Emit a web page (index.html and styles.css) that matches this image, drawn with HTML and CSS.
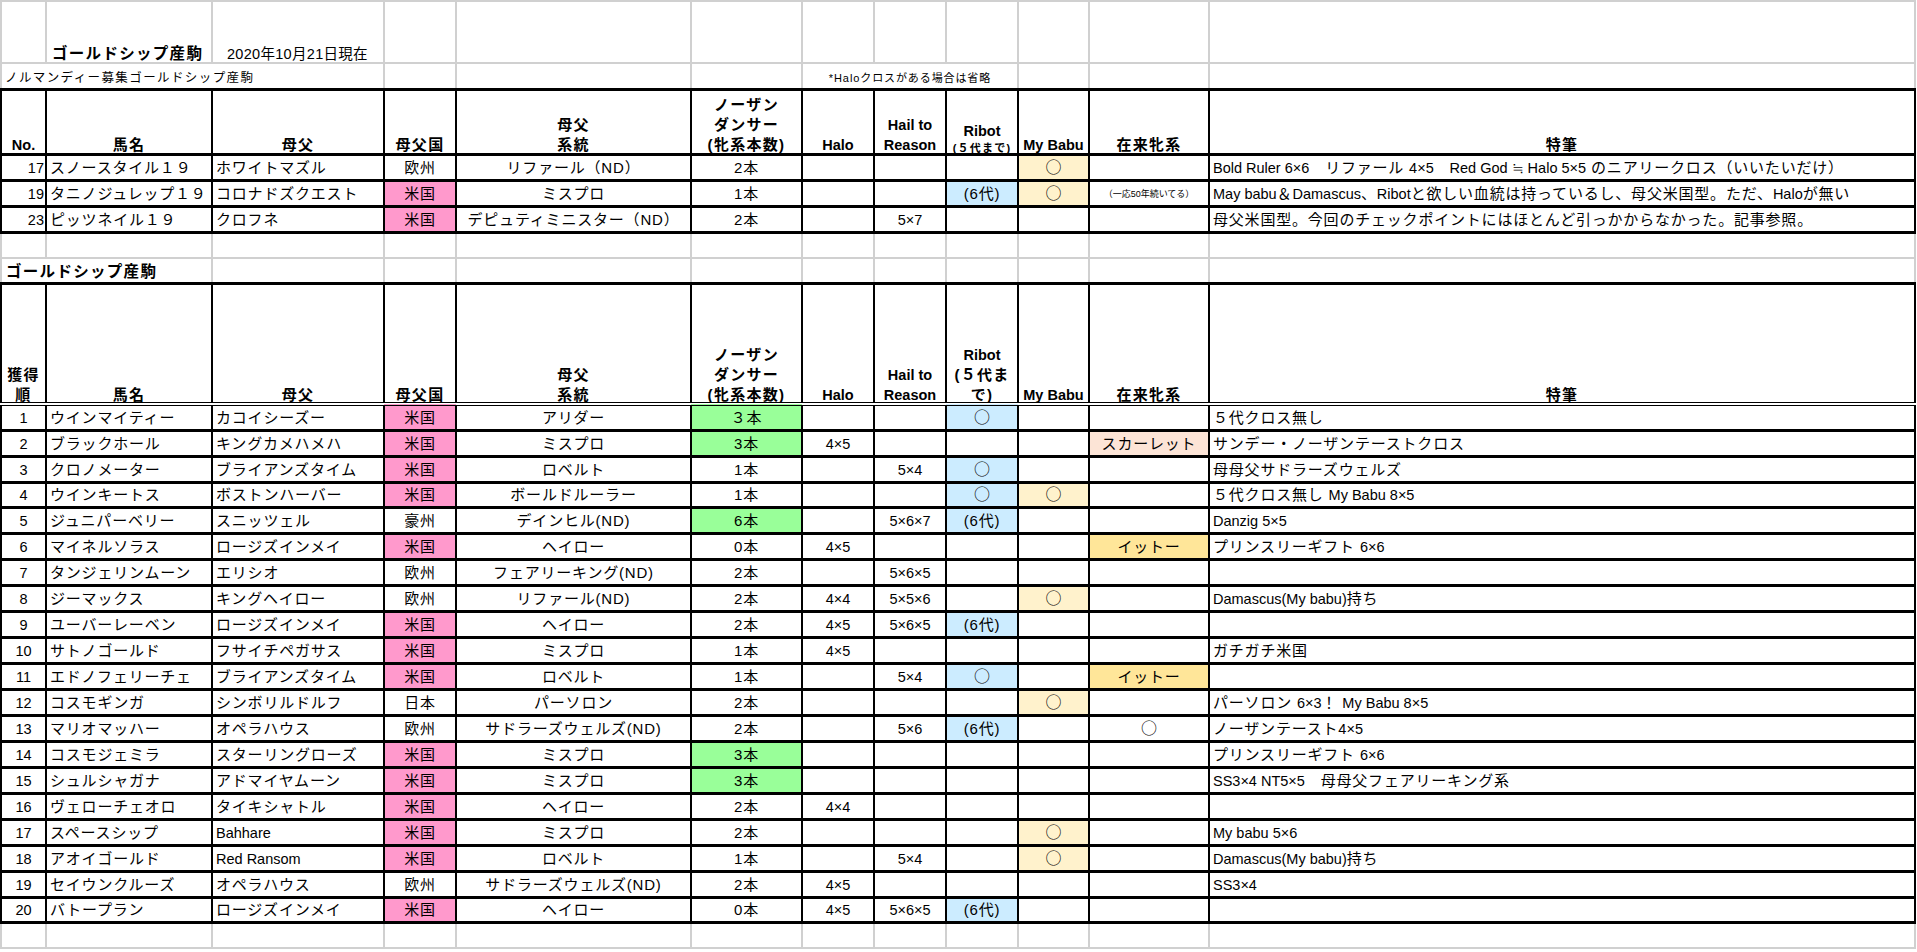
FILE: index.html
```html
<!DOCTYPE html>
<html lang="ja">
<head>
<meta charset="utf-8">
<title>ゴールドシップ産駒</title>
<link rel="stylesheet" href="styles.css">
</head>
<body>
<table class="sheet">
<colgroup>
<col class="c0"><col class="c1"><col class="c2"><col class="c3"><col class="c4"><col class="c5"><col class="c6"><col class="c7"><col class="c8"><col class="c9"><col class="c10"><col class="c11">
</colgroup>
<tbody>
<tr class="h62">
<td></td>
<td class="title">ゴールドシップ産駒</td>
<td class="date">2020年10月21日現在</td>
<td></td><td></td><td></td><td></td><td></td><td></td><td></td><td></td><td></td>
</tr>
<tr class="h26">
<td colspan="3" class="sub">ノルマンディー募集ゴールドシップ産駒</td>
<td></td><td></td><td></td>
<td colspan="3" class="note c">*Haloクロスがある場合は省略</td>
<td></td><td></td><td></td>
</tr>
<tr class="h65 b hd hd1">
<td class="c n"><div class="in">No.</div></td>
<td class="c"><div class="in">馬名</div></td>
<td class="c"><div class="in">母父</div></td>
<td class="c"><div class="in">母父国</div></td>
<td class="c"><div class="in">母父<br>系統</div></td>
<td class="c"><div class="in">ノーザン<br>ダンサー<br>(牝系本数)</div></td>
<td class="c n"><div class="in">Halo</div></td>
<td class="c n"><div class="in">Hail to<br>Reason</div></td>
<td class="c"><div class="in"><span class="n">Ribot</span><span class="sm">(５代まで)</span></div></td>
<td class="c n"><div class="in">My Babu</div></td>
<td class="c"><div class="in">在来牝系</div></td>
<td class="c"><div class="in">特筆</div></td>
</tr>
<tr class="h26 b d">
<td class="r n">17</td>
<td>スノースタイル１９</td>
<td>ホワイトマズル</td>
<td class="c">欧州</td>
<td class="c">リファール（ND）</td>
<td class="c">2本</td>
<td></td><td></td><td></td>
<td class="c cr"><span class="maru">○</span></td>
<td></td>
<td><span class="en">Bold Ruler 6×6</span>　リファール <span class="en">4×5</span>　<span class="en">Red God ≒ Halo 5×5</span> のニアリークロス（いいたいだけ）</td>
</tr>
<tr class="h26 b d">
<td class="r n">19</td>
<td>タニノジュレップ１９</td>
<td>コロナドズクエスト</td>
<td class="c pk">米国</td>
<td class="c">ミスプロ</td>
<td class="c">1本</td>
<td></td><td></td>
<td class="c bl">(6代)</td>
<td class="c cr"><span class="maru">○</span></td>
<td class="c tiny">（一応50年続いてる）</td>
<td><span class="en">May babu</span>＆<span class="en">Damascus</span>、<span class="en">Ribot</span>と欲しい血統は持っているし、母父米国型。ただ、<span class="en">Halo</span>が無い</td>
</tr>
<tr class="h26 b d">
<td class="r n">23</td>
<td>ピッツネイル１９</td>
<td>クロフネ</td>
<td class="c pk">米国</td>
<td class="c">デピュティミニスター（ND）</td>
<td class="c">2本</td>
<td></td>
<td class="c n">5×7</td>
<td></td><td></td><td></td>
<td>母父米国型。今回のチェックポイントにはほとんど引っかからなかった。記事参照。</td>
</tr>
<tr class="h26">
<td></td><td></td><td></td><td></td><td></td><td></td><td></td><td></td><td></td><td></td><td></td><td></td>
</tr>
<tr class="h25">
<td colspan="2" class="title sub2">ゴールドシップ産駒</td>
<td></td><td></td><td></td><td></td><td></td><td></td><td></td><td></td><td></td><td></td>
</tr>
<tr class="h121 b hd hd2">
<td class="c"><div class="in">獲得<br>順</div></td>
<td class="c"><div class="in">馬名</div></td>
<td class="c"><div class="in">母父</div></td>
<td class="c"><div class="in">母父国</div></td>
<td class="c"><div class="in">母父<br>系統</div></td>
<td class="c"><div class="in">ノーザン<br>ダンサー<br>(牝系本数)</div></td>
<td class="c n"><div class="in">Halo</div></td>
<td class="c n"><div class="in">Hail to<br>Reason</div></td>
<td class="c"><div class="in"><span class="n">Ribot</span><br>(５代ま<br>で)</div></td>
<td class="c n"><div class="in">My Babu</div></td>
<td class="c"><div class="in">在来牝系</div></td>
<td class="c"><div class="in">特筆</div></td>
</tr>
<tr class="h26 b d">
<td class="c n">1</td><td>ウインマイティー</td><td>カコイシーズー</td><td class="c pk">米国</td><td class="c">アリダー</td><td class="c gr">３本</td><td></td><td></td><td class="c bl"><span class="maru">○</span></td><td></td><td></td><td>５代クロス無し</td>
</tr>
<tr class="h26 b d">
<td class="c n">2</td><td>ブラックホール</td><td>キングカメハメハ</td><td class="c pk">米国</td><td class="c">ミスプロ</td><td class="c gr">3本</td><td class="c n">4×5</td><td></td><td></td><td></td><td class="c pe">スカーレット</td><td>サンデー・ノーザンテーストクロス</td>
</tr>
<tr class="h26 b d">
<td class="c n">3</td><td>クロノメーター</td><td>ブライアンズタイム</td><td class="c pk">米国</td><td class="c">ロベルト</td><td class="c">1本</td><td></td><td class="c n">5×4</td><td class="c bl"><span class="maru">○</span></td><td></td><td></td><td>母母父サドラーズウェルズ</td>
</tr>
<tr class="h25 b d">
<td class="c n">4</td><td>ウインキートス</td><td>ボストンハーバー</td><td class="c pk">米国</td><td class="c">ボールドルーラー</td><td class="c">1本</td><td></td><td></td><td class="c bl"><span class="maru">○</span></td><td class="c cr"><span class="maru">○</span></td><td></td><td>５代クロス無し <span class="en">My Babu 8×5</span></td>
</tr>
<tr class="h26 b d">
<td class="c n">5</td><td>ジュニパーベリー</td><td>スニッツェル</td><td class="c">豪州</td><td class="c">デインヒル(ND)</td><td class="c gr">6本</td><td></td><td class="c n">5×6×7</td><td class="c bl">(6代)</td><td></td><td></td><td><span class="en">Danzig 5×5</span></td>
</tr>
<tr class="h26 b d">
<td class="c n">6</td><td>マイネルソラス</td><td>ロージズインメイ</td><td class="c pk">米国</td><td class="c">ヘイロー</td><td class="c">0本</td><td class="c n">4×5</td><td></td><td></td><td></td><td class="c go">イットー</td><td>プリンスリーギフト <span class="en">6×6</span></td>
</tr>
<tr class="h26 b d">
<td class="c n">7</td><td>タンジェリンムーン</td><td>エリシオ</td><td class="c">欧州</td><td class="c">フェアリーキング(ND)</td><td class="c">2本</td><td></td><td class="c n">5×6×5</td><td></td><td></td><td></td><td></td>
</tr>
<tr class="h26 b d">
<td class="c n">8</td><td>ジーマックス</td><td>キングヘイロー</td><td class="c">欧州</td><td class="c">リファール(ND)</td><td class="c">2本</td><td class="c n">4×4</td><td class="c n">5×5×6</td><td></td><td class="c cr"><span class="maru">○</span></td><td></td><td><span class="en">Damascus(My babu)</span>持ち</td>
</tr>
<tr class="h26 b d">
<td class="c n">9</td><td>ユーバーレーベン</td><td>ロージズインメイ</td><td class="c pk">米国</td><td class="c">ヘイロー</td><td class="c">2本</td><td class="c n">4×5</td><td class="c n">5×6×5</td><td class="c bl">(6代)</td><td></td><td></td><td></td>
</tr>
<tr class="h26 b d">
<td class="c n">10</td><td>サトノゴールド</td><td>フサイチペガサス</td><td class="c pk">米国</td><td class="c">ミスプロ</td><td class="c">1本</td><td class="c n">4×5</td><td></td><td></td><td></td><td></td><td>ガチガチ米国</td>
</tr>
<tr class="h26 b d">
<td class="c n">11</td><td>エドノフェリーチェ</td><td>ブライアンズタイム</td><td class="c pk">米国</td><td class="c">ロベルト</td><td class="c">1本</td><td></td><td class="c n">5×4</td><td class="c bl"><span class="maru">○</span></td><td></td><td class="c go">イットー</td><td></td>
</tr>
<tr class="h26 b d">
<td class="c n">12</td><td>コスモギンガ</td><td>シンボリルドルフ</td><td class="c">日本</td><td class="c">パーソロン</td><td class="c">2本</td><td></td><td></td><td></td><td class="c cr"><span class="maru">○</span></td><td></td><td>パーソロン <span class="en">6×3</span>！ <span class="en">My Babu 8×5</span></td>
</tr>
<tr class="h26 b d">
<td class="c n">13</td><td>マリオマッハー</td><td>オペラハウス</td><td class="c">欧州</td><td class="c">サドラーズウェルズ(ND)</td><td class="c">2本</td><td></td><td class="c n">5×6</td><td class="c bl">(6代)</td><td></td><td class="c"><span class="maru">○</span></td><td>ノーザンテースト<span class="en">4×5</span></td>
</tr>
<tr class="h26 b d">
<td class="c n">14</td><td>コスモジェミラ</td><td>スターリングローズ</td><td class="c pk">米国</td><td class="c">ミスプロ</td><td class="c gr">3本</td><td></td><td></td><td></td><td></td><td></td><td>プリンスリーギフト <span class="en">6×6</span></td>
</tr>
<tr class="h26 b d">
<td class="c n">15</td><td>シュルシャガナ</td><td>アドマイヤムーン</td><td class="c pk">米国</td><td class="c">ミスプロ</td><td class="c gr">3本</td><td></td><td></td><td></td><td></td><td></td><td><span class="en">SS3×4 NT5×5</span>　母母父フェアリーキング系</td>
</tr>
<tr class="h26 b d">
<td class="c n">16</td><td>ヴェローチェオロ</td><td>タイキシャトル</td><td class="c pk">米国</td><td class="c">ヘイロー</td><td class="c">2本</td><td class="c n">4×4</td><td></td><td></td><td></td><td></td><td></td>
</tr>
<tr class="h26 b d">
<td class="c n">17</td><td>スペースシップ</td><td class="en">Bahhare</td><td class="c pk">米国</td><td class="c">ミスプロ</td><td class="c">2本</td><td></td><td></td><td></td><td class="c cr"><span class="maru">○</span></td><td></td><td><span class="en">My babu 5×6</span></td>
</tr>
<tr class="h26 b d">
<td class="c n">18</td><td>アオイゴールド</td><td class="en">Red Ransom</td><td class="c pk">米国</td><td class="c">ロベルト</td><td class="c">1本</td><td></td><td class="c n">5×4</td><td></td><td class="c cr"><span class="maru">○</span></td><td></td><td><span class="en">Damascus(My babu)</span>持ち</td>
</tr>
<tr class="h26 b d">
<td class="c n">19</td><td>セイウンクルーズ</td><td>オペラハウス</td><td class="c">欧州</td><td class="c">サドラーズウェルズ(ND)</td><td class="c">2本</td><td class="c n">4×5</td><td></td><td></td><td></td><td></td><td><span class="en">SS3×4</span></td>
</tr>
<tr class="h25 b d">
<td class="c n">20</td><td>バトープラン</td><td>ロージズインメイ</td><td class="c pk">米国</td><td class="c">ヘイロー</td><td class="c">0本</td><td class="c n">4×5</td><td class="c n">5×6×5</td><td class="c bl">(6代)</td><td></td><td></td><td></td>
</tr>
<tr class="h26">
<td></td><td></td><td></td><td></td><td></td><td></td><td></td><td></td><td></td><td></td><td></td><td></td>
</tr>
</tbody>
</table>
</body>
</html>
```

FILE: styles.css
```css
html, body {
  margin: 0;
  padding: 0;
  background: #ffffff;
}

body {
  font-family: "Liberation Sans", "Noto Sans CJK JP", sans-serif;
  color: #000000;
}

.sheet {
  border-collapse: collapse;
  table-layout: fixed;
  width: 1914px;
}

.c0 { width: 45px; }
.c1 { width: 166px; }
.c2 { width: 172px; }
.c3 { width: 72px; }
.c4 { width: 235px; }
.c5 { width: 111px; }
.c6 { width: 72px; }
.c7 { width: 72px; }
.c8 { width: 72px; }
.c9 { width: 71px; }
.c10 { width: 120px; }
.c11 { width: 706px; }

.sheet td {
  border: 2px solid #d0d0d0;
  padding: 0 3px;
  vertical-align: bottom;
  white-space: nowrap;
  overflow: visible;
  font-size: 15px;
  line-height: 16px;
  letter-spacing: 0.8px;
  text-align: left;
}

.h62 { height: 62px; }
.h65 { height: 65px; }
.h121 { height: 121px; }
.h26 { height: 26px; }
.h25 { height: 25px; }

.sheet tr.b td {
  border-top: 3px solid #000000;
  border-bottom: 3px solid #000000;
  border-left: 2px solid #000000;
  border-right: 2px solid #000000;
}

.sheet tr.d td {
  padding-bottom: 3px;
}

.sheet tr.hd2 td {
  border-bottom: 4px double #000000;
}

.sheet tr.hd td {
  font-weight: bold;
  line-height: 20px;
  letter-spacing: 1.3px;
}

.sheet tr.hd1 .in {
  margin-bottom: -2px;
}

.sheet tr.hd2 .in {
  margin-bottom: -3px;
}

.sheet td.c { text-align: center; }
.sheet td.r { text-align: right; padding-right: 1px; }

.sheet td.n,
.sheet tr.hd td.n,
.sheet td.en,
.n,
.en {
  letter-spacing: 0;
  font-size: 14.5px;
}

.maru {
  font-family: "Noto Sans CJK JP", sans-serif;
  font-size: 16px;
  letter-spacing: 0;
}

.sheet td.title {
  font-weight: bold;
  font-size: 15.5px;
  letter-spacing: 1.3px;
  padding-left: 5px;
}

.sheet td.sub2 {
  padding-left: 4px;
  padding-bottom: 2px;
}

.sheet td.date {
  font-size: 14.5px;
  letter-spacing: 0.3px;
  padding-left: 14px;
}

.sheet td.sub {
  font-size: 12.5px;
  letter-spacing: 1.4px;
  padding-left: 3px;
  padding-bottom: 2px;
}

.sheet td.note {
  font-size: 11px;
  letter-spacing: 0.9px;
  padding-bottom: 2px;
}

.sheet td.tiny {
  font-size: 9px;
  letter-spacing: 0;
  padding-bottom: 2px;
}

.sm {
  display: block;
  font-size: 11px;
  line-height: 14px;
  letter-spacing: 1.2px;
  margin: 0 -6px;
}

.pk { background: #ff99cc; }
.bl { background: #ccecff; }
.cr { background: #fff2cc; }
.gr { background: #99ff99; }
.pe { background: #fce4d6; }
.go { background: #ffe699; }
```
